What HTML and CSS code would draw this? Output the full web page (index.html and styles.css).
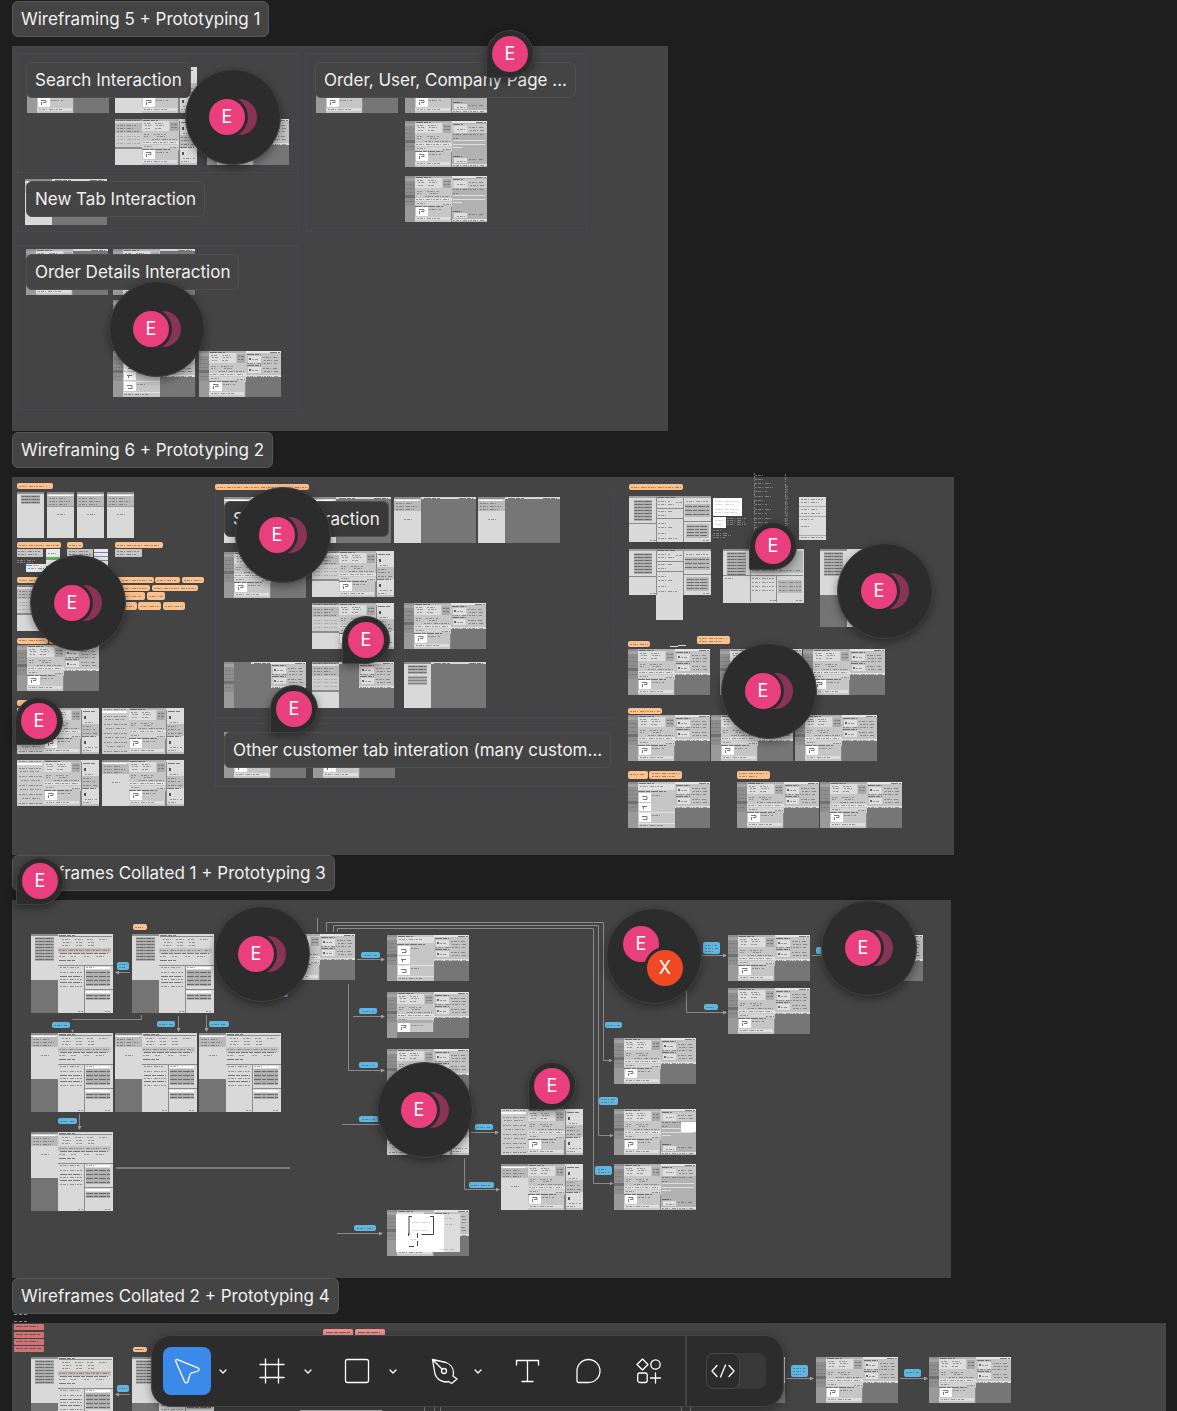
FILE: index.html
```html
<!DOCTYPE html>
<html lang="en">
<head>
<meta charset="utf-8">
<meta name="viewport" content="width=device-width, initial-scale=1">
<title>Wireframes</title>
<link rel="stylesheet" href="styles.css">
</head>
<body>
<svg class="defs" aria-hidden="true">
  <defs>
    <!-- narrow navigation rail, 10 wide -->
    <g id="rail">
      <rect width="10" height="46" fill="#8e8e8e"/>
      <rect y="2" width="10" height="3" fill="#a2a2a2"/>
      <rect y="19" width="10" height="3" fill="#707070"/>
      <rect y="30" width="10" height="16" fill="#9a9a9a"/>
      <path class="ink soft" d="M1 8.5h8M1 12.5h8M1 16.5h8M1 25.5h8"/>
    </g>
    <!-- wide navigation list, 27 wide -->
    <g id="nav">
      <rect width="27" height="46" fill="#d9d9d9"/>
      <rect width="27" height="2" fill="#8c8c8c"/>
      <rect y="4" width="27" height="10" fill="#b9b9b9"/>
      <rect y="14" width="27" height="14" fill="#cdcdcd"/>
      <rect y="28" width="27" height="2" fill="#8c8c8c"/>
      <path class="ink" d="M2 1.5h22M2 6.5h20M2 9.5h16M2 12.5h22"/>
      <path class="ink soft" d="M2 17.5h23M2 20.5h23M2 24.5h23"/>
    </g>
    <g id="nav-list">
      <rect width="27" height="46" fill="#cbcbcb"/>
      <rect y="3" width="25" height="2" fill="#fff"/>
      <path class="ink" d="M2 1.5h22M2 8.5h22M3 11.5h20M2 16.5h23M4 20.5h19M2 25.5h23M3 29.5h21M2 34.5h23M5 38.5h18M2 43.5h23"/>
    </g>
    <g id="nav-short">
      <rect width="27" height="46" fill="#d9d9d9"/>
      <rect width="27" height="2" fill="#8c8c8c"/>
      <rect y="4" width="27" height="10" fill="#b9b9b9"/>
      <path d="M2 3.5h22" stroke="#fff"/>
      <path class="ink" d="M2 6.5h16M2 9.5h21M2 12.5h18M10 22.5h9"/>
    </g>
    <g id="nav-bars">
      <rect width="27" height="46" fill="#d9d9d9"/>
      <rect width="27" height="2" fill="#8c8c8c"/>
      <path d="M4 4.5h19M4 7.5h19M4 10.5h19" stroke="#858585" stroke-width="2"/>
      <path class="ink" d="M5 4.5h17M5 7.5h17M5 10.5h17"/>
    </g>
    <g id="nav-full">
      <use href="#nav-bars"/>
      <path d="M4 13.5h19M4 16.5h19M4 19.5h19M4 22.5h19M4 25.5h19" stroke="#858585" stroke-width="2"/>
      <path class="ink" d="M5 13.5h17M5 16.5h17M5 19.5h17M5 22.5h17M5 25.5h17"/>
    </g>
    <!-- order details column, 37 wide -->
    <g id="main">
      <rect width="37" height="46" fill="#c6c6c6"/>
      <rect width="37" height="2" fill="#b0b0b0"/>
      <rect y="2" width="27" height="10" fill="#dcdcdc"/>
      <rect x="28" y="3" width="8" height="9" fill="#a9a9a9"/>
      <rect y="22" width="37" height="3" fill="#e0e0e0"/>
      <rect y="26" width="37" height="3" fill="#d4d4d4"/>
      <rect x="1" y="31" width="12" height="9" fill="#fff"/>
      <rect y="41" width="35" height="3" fill="#dedede"/>
      <rect x="36" y="31" width="1" height="15" fill="#888"/>
      <path class="ink strong" d="M1 1.5h15M0 30.5h28"/>
      <path class="ink" d="M2 4.5h7M13 4.5h8M3 6.5h6M14 6.5h9M3 9.5h5M13 9.5h7M29 5.5h6M29 8.5h6M2 15.5h5M12 15.5h12M2 17.5h4M15 17.5h9M10 20.5h26M1 23.5h34M2 27.5h8M28 28.5h8M2 42.5h24M14 33.5h12"/>
      <path class="plan" d="M4 33.5h5v2h-3M4.500 35v3"/>
    </g>
    <g id="plans">
      <rect width="37" height="46" fill="#c6c6c6"/>
      <rect y="2" width="37" height="6" fill="#e0e0e0"/>
      <path d="M1 11h12v9h-12zM1 21h12v8h-12zM1 31h12v9h-12z" fill="#fff"/>
      <path d="M0 30.5h37M0 41.5h37" stroke="#e2e2e2"/>
      <path class="ink strong" d="M1 1.5h15M0 9.5h28"/>
      <path class="ink" d="M2 4.5h24M14 13.5h10M14 33.5h10M2 43.5h24"/>
      <path class="plan" d="M4 14.5h5v3h-4M4 24.5h5M5.500 27v-2M4 34.5h5v3h-4"/>
    </g>
    <!-- customer panels, 35 wide and 26 high -->
    <g id="panels">
      <rect width="35" height="26" fill="#c2c2c2"/>
      <rect width="35" height="2" fill="#e6e6e6"/>
      <path d="M2 5h13v7H2zM2 16h13v6H2zM0 24h35v2H0z" fill="#dedede"/>
      <path class="ink strong" d="M1 3.5h14M1 14.5h14M24 1.5h10"/>
      <path class="ink" d="M17 6.5h14M18 9.5h15M6 8.5h6M1 12.5h30M17 17.5h14M18 20.5h15M6 19.5h6M1 25.5h32"/>
      <path d="M3 7h2v2H3zM3 18h2v2H3z" fill="#666"/>
    </g>
    <g id="panels-tall">
      <rect width="35" height="46" fill="#b2b2b2"/>
      <rect width="35" height="2" fill="#e6e6e6"/>
      <rect y="3" width="35" height="9" fill="#c8c8c8"/>
      <path d="M2 5h13v7H2zM1 19h32v1H1zM1 23h32v1H1zM1 26h9v1H1zM2 37h13v5H2zM0 43h35v2H0z" fill="#dedede"/>
      <path class="ink strong" d="M1 3.5h10M1 35.5h9M24 1.5h10"/>
      <path class="ink" d="M17 6.5h14M18 9.5h14M5 8.5h8M1 13.5h30M1 17.5h5M5 40.5h8M17 38.5h15M1 44.5h32"/>
    </g>
    <g id="aside">
      <rect width="18" height="46" fill="#dcdcdc"/>
      <path d="M0 16h18v12H0zM0 44h18v2H0z" fill="#bdbdbd"/>
      <path d="M.5 2v44" stroke="#858585"/>
      <path class="ink strong" d="M2 3.5h12M1 28.5h14"/>
      <path class="ink" d="M4 14.5h9M2 18.5h9M2 21.5h12M2 25.5h14M4 39.5h12M2 42.5h9"/>
      <path d="M3 8h2v3H3zM3 33h2v3H3z" fill="#555"/>
    </g>
    <!-- whole screens, 82 x 46 -->
    <g id="blank"><rect width="82" height="46" fill="#767676"/><path d="M27 1h55" stroke="#d8d8d8" stroke-width="2"/><path class="ink strong" d="M30 1.5h16M65 1.5h14"/></g>
    <g id="scr"><use href="#blank"/><use href="#rail"/><use href="#main" x="10"/><use href="#panels" x="47"/></g>
    <g id="scr-plans"><use href="#blank"/><use href="#rail"/><use href="#plans" x="10"/><use href="#panels" x="47"/></g>
    <g id="scr-detail"><use href="#blank"/><use href="#rail"/><use href="#main" x="10"/></g>
    <g id="scr-tall"><use href="#rail"/><use href="#main" x="10"/><use href="#panels-tall" x="47"/></g>
    <g id="scr-wide"><use href="#nav"/><use href="#main" x="27"/><use href="#aside" x="64"/></g>
    <g id="scr-list"><use href="#nav-list"/><use href="#main" x="27"/><use href="#aside" x="64"/></g>
    <g id="scr-short"><use href="#nav-short"/><use href="#main" x="27"/><use href="#aside" x="64"/></g>
    <g id="scr-nav"><use href="#blank"/><use href="#nav-short"/></g>
    <g id="scr-menu"><use href="#blank"/><use href="#nav-bars"/><path d="M4 15.5h19M4 18.5h19M4 21.5h19" stroke="#858585" stroke-width="2"/></g>
    <g id="scr-rail"><use href="#blank"/><use href="#rail"/><path d="M10 2h17v1H10z" fill="#767676"/><use href="#panels" x="47"/></g>
    <g id="scr-mixed"><use href="#blank"/><use href="#nav"/><use href="#panels" x="47"/></g>
    <!-- product form, 55 wide -->
    <g id="form">
      <rect width="55" height="79" fill="#d9d9d9"/>
      <path d="M0 14h53v5H0z" fill="#c4c4c4"/>
      <path d="M1 2.5h53M0 31.5h55M26.5 31v48M27 55.5h28" stroke="#8a8a8a"/>
      <path d="M27 33h25v2H27zM27 57h25v2H27z" fill="#fff"/>
      <path d="M28 36h24v16H28zM28 60h24v6H28z" fill="#b0b0b0"/>
      <path class="ink strong" d="M1 1.5h16M2 19.5h48M1 26.5h16M2 42.5h22M2 48.5h22M28 38.5h24M28 42.5h24M28 46.5h24M28 50.5h24M28 61.5h24M28 64.5h24"/>
      <path class="ink" d="M4 5.5h10M17 5.5h8M29 5.5h6M41 5.5h9M5 8.5h9M18 8.5h6M30 8.5h6M4 11.5h9M18 11.5h7M30 11.5h6M1 16.5h50M1 22.5h6M13 22.5h5M26 22.5h5M38 22.5h8M2 33.5h20M28 33.5h10M2 38.5h22M2 45.5h22M2 52.5h22M20 77.5h5M47 77.5h5"/>
    </g>
    <g id="big"><rect width="82" height="79" fill="#747474"/><use href="#nav-full"/><use href="#form" x="27"/></g>
    <g id="big-nav"><rect width="82" height="79" fill="#747474"/><use href="#nav-short"/><use href="#form" x="27"/></g>
    <g id="trio">
      <rect width="82" height="46" fill="#dadada"/><rect width="82" height="2" fill="#a0a0a0"/>
      <path d="M5 5.5h18M5 8.5h18M5 11.5h18M5 14.5h18M5 17.5h18M5 20.5h18M5 23.5h18" stroke="#858585" stroke-width="2"/>
      <path d="M56 8h25v13H56zM57 28h23v14H57z" fill="#b8b8b8"/>
      <path d="M27.5 2v44M54.5 2v44M0 27.5h27M27 12.5h27M27 22.5h27M55 25.5h27" stroke="#8a8a8a"/>
      <path class="ink strong" d="M28 1.5h18M56 10.5h24M56 14.5h24M56 18.5h24M58 30.5h21M58 33.5h21M58 36.5h21M58 39.5h21"/>
      <path class="ink" d="M6 5.5h16M6 8.5h16M6 11.5h16M6 14.5h16M6 17.5h16M6 20.5h16M6 23.5h16M29 5.5h12M29 8.5h17M47 6.5h6M29 15.5h14M29 19.5h8M29 27.5h10M29 31.5h14M29 37.5h10M29 42.5h20M57 5.5h22M21 44.5h6M74 44.5h6"/>
    </g>
    <g id="phone"><use href="#nav-short"/><path d="M0 14.5h27" stroke="#999"/></g>
    <marker id="tip" viewBox="0 0 4 4" refX="3" refY="2" markerWidth="4" markerHeight="4" orient="auto"><path d="M0 0l4 2-4 2z" fill="#a0a0a0"/></marker>
  </defs>
</svg>

<main class="canvas">
  <section class="section">
    <h2 class="label">Wireframing 5 + Prototyping 1</h2>
    <div class="board board-one">
      <svg class="art" viewBox="12 46 656 385" width="656" height="385" aria-hidden="true">
        <path class="frame" d="M17.500 53.500h281v178h-281zM17.500 172.500h281M306.500 53.500h280v178h-280zM17.500 245.500h281v164h-281z"/>
        <use href="#scr-detail" x="27" y="67"/><use href="#scr-wide" x="115" y="67"/>
        <use href="#scr-wide" x="115" y="119"/><use href="#scr" x="207" y="119"/>
        <use href="#scr-nav" x="25" y="179"/>
        <use href="#scr-detail" x="26" y="249"/><use href="#scr-detail" x="113" y="249"/>
        <use href="#scr" x="113" y="300"/>
        <rect x="112" y="322" width="84" height="28" fill="#444"/>
        <use href="#scr-plans" x="113" y="351"/><use href="#scr" x="199" y="351"/>
        <use href="#scr-detail" x="316" y="67"/><use href="#scr-tall" x="405" y="67"/>
        <use href="#scr-tall" x="405" y="121"/><use href="#scr-tall" x="405" y="176"/>
      </svg>
      <h3 class="label inner at-search">Search Interaction</h3>
      <h3 class="label inner at-newtab">New Tab Interaction</h3>
      <h3 class="label inner at-details">Order Details Interaction</h3>
      <h3 class="label inner at-pages">Order, User, Company Page ...</h3>
      <button class="cluster c1"><span class="avatar">E</span></button>
      <button class="cluster c2"><span class="avatar">E</span></button>
      <button class="pin p1"><span class="avatar">E</span></button>
    </div>
  </section>

  <section class="section">
    <h2 class="label">Wireframing 6 + Prototyping 2</h2>
    <div class="board board-two">
      <svg class="art" viewBox="12 477 942 378" width="942" height="378" aria-hidden="true">
        <path class="frame" d="M613.500 660v-168M215.500 492.500v225h398M215.500 786.500v-63h398M215.500 786.500h398"/>
        <g fill="#fcc08c">
          <rect x="17" y="483" width="36" height="6" rx="2"/><rect x="215" y="484" width="94" height="6" rx="2"/>
          <rect x="17" y="542" width="44" height="6" rx="2"/><rect x="67" y="542" width="16" height="6" rx="2"/><rect x="115" y="542" width="48" height="6" rx="2"/>
          <rect x="17" y="577" width="50" height="6" rx="2"/><rect x="110" y="577" width="44" height="6" rx="2"/><rect x="155" y="577" width="25" height="6" rx="2"/><rect x="182" y="577" width="22" height="6" rx="2"/>
          <rect x="110" y="585" width="40" height="6" rx="2"/><rect x="152" y="585" width="46" height="6" rx="2"/>
          <rect x="110" y="592" width="35" height="8" rx="2"/><rect x="147" y="592" width="18" height="8" rx="2"/>
          <rect x="110" y="602" width="27" height="8" rx="2"/><rect x="138" y="602" width="23" height="8" rx="2"/><rect x="163" y="602" width="22" height="8" rx="2"/>
          <rect x="17" y="638" width="31" height="6" rx="2"/><rect x="49" y="638" width="20" height="6" rx="2"/><rect x="17" y="700" width="20" height="6" rx="2"/>
          <rect x="629" y="484" width="54" height="6" rx="2"/><rect x="628" y="641" width="22" height="6" rx="2"/><rect x="697" y="636" width="33" height="8" rx="2"/>
          <rect x="628" y="708" width="34" height="6" rx="2"/><rect x="628" y="771" width="20" height="8" rx="2"/><rect x="649" y="771" width="33" height="8" rx="2"/><rect x="737" y="771" width="33" height="8" rx="2"/>
        </g>
        <path class="ink" d="M19 486.500h28M217 487.500h90M19 545.500h40M69 545.500h12M117 545.500h44M19 580.500h46M122 580.500h30M157 580.500h20M184 580.500h18M122 588.500h26M154 588.500h42M122 596.500h20M149 596.500h14M126 606.500h9M140 606.500h19M165 606.500h18M19 640.500h27M631 487.500h50M630 644.500h18M699 638.500h28M699 641.500h22M630 711.500h30M630 774.500h14M652 773.500h28M652 776.500h24M739 773.500h28M739 776.500h18"/>
        <use href="#nav-bars" x="17" y="492"/><use href="#phone" x="47" y="492"/><use href="#phone" x="77" y="492"/><use href="#phone" x="107" y="492"/>
        <path d="M17 549h26v8H17zM67 549h26v8H67zM115 549h27v8H115z" fill="#c4c4c4"/>
        <path d="M46 549h14v17H46zM94 549h14v17H94zM26 564h20v8H26z" fill="#e6e9ee"/>
        <path d="M46 557h14v3H46z" fill="#6cb35c"/>
        <path d="M26 565.500h6" stroke="#5f9de0"/><path d="M33 565.500h6" stroke="#f0a35e"/>
        <path d="M94 552.500h14M94 556.500h14M94 560.500h14" stroke="#7f8797"/>
        <path class="ink" d="M18 551.500h22M18 554.500h20M69 551.500h20M69 554.500h22M117 551.500h22M117 554.500h20M48 553.500h10M28 568.500h16"/>
        <path class="ink pale" d="M17 560.500h18M17 562.500h16"/>
        <use href="#nav" x="17" y="585"/><use href="#scr" x="17" y="645"/>
        <use href="#scr-list" x="17" y="708"/><use href="#scr-list" x="102" y="708"/>
        <use href="#scr-list" x="17" y="760"/><use href="#scr-short" x="102" y="760"/>
        <use href="#scr-nav" x="224" y="497"/><use href="#scr-nav" x="309" y="497"/><use href="#scr-nav" x="394" y="497"/><use href="#scr-nav" x="478" y="497"/>
        <use href="#scr-detail" x="224" y="552"/><use href="#scr-wide" x="312" y="551"/>
        <use href="#scr-wide" x="312" y="603"/><use href="#scr" x="404" y="603"/>
        <use href="#scr-rail" x="224" y="662"/><use href="#scr-mixed" x="312" y="662"/><use href="#scr-menu" x="404" y="662"/>
        <use href="#scr-detail" x="224" y="732"/><use href="#scr-detail" x="313" y="732"/>
        <use href="#trio" x="629" y="496"/><use href="#trio" x="629" y="549"/>
        <rect x="656" y="595" width="27" height="25" fill="#dadada"/>
        <path d="M713 498h29v18h-29zM713 517h13v11h-13z" fill="#fff"/>
        <path class="ink soft" d="M715 501.500h25M715 504.500h20M715 509.500h24M715 512.500h22M715 520.500h9M715 524.500h9"/>
        <path class="ink pale" d="M727 518.500h20M727 520.500h14M727 522.500h18M727 524.500h20M713 530.500h8M713 533.500h14M713 535.500h18M713 537.500h12"/>
        <path class="ink pale" d="M754.500 473v60M785.500 474v58M755 475.500h8M755 479.500h8M755 483.500h16M755 487.500h18M755 491.500h12M755 496.500h16M755 500.500h10M755 504.500h12M755 509.500h17M755 513.500h12M755 518.500h16M755 522.500h13M755 527.500h16M787 485.500v40"/>
        <rect x="799" y="497" width="27" height="43" fill="#dcdcdc"/>
        <path d="M799 506.500h27M799 516.500h27M799 535.500h27" stroke="#aaa"/>
        <path class="ink" d="M801 499.500h22M801 502.500h18M801 509.500h16M801 513.500h20M801 519.500h12M801 526.500h10M801 537.500h22"/>
        <rect x="723" y="549" width="81" height="54" fill="#d9d9d9"/><use href="#nav-full" x="723" y="549"/>
        <path d="M750 551h53v22h-53zM778 580h24v13h-24z" fill="#b8b8b8"/><path d="M723 575.500h80M750.500 549v53M776.500 575v27" stroke="#8a8a8a"/>
        <path class="ink" d="M752 570.500h48M752 578.500h22M752 582.500h22M752 586.500h22M752 590.500h22M779 582.500h22M779 586.500h22M779 590.500h22M725 578.500h10M770 600.500h6M796 600.500h6"/>
        <rect x="820" y="549" width="50" height="78" fill="#747474"/><use href="#nav-full" x="820" y="549"/><rect x="847" y="549" width="30" height="78" fill="#dadada"/>
        <path d="M670 646.500h8M678 645.500h8" stroke="#ddd"/>
        <use href="#scr" x="628" y="649"/><use href="#scr" x="720" y="649"/><use href="#scr" x="803" y="649"/>
        <use href="#scr" x="628" y="715"/><use href="#scr" x="711" y="715"/><use href="#scr" x="795" y="715"/>
        <use href="#scr-plans" x="628" y="782"/><use href="#scr" x="737" y="782"/><use href="#scr" x="820" y="782"/>
      </svg>
      <h3 class="label inner dim at-search-two">Search Interaction</h3>
      <h3 class="label inner at-other">Other customer tab interation (many custom...</h3>
      <button class="cluster c3"><span class="avatar">E</span></button>
      <button class="cluster c4"><span class="avatar">E</span></button>
      <button class="cluster c5"><span class="avatar">E</span></button>
      <button class="cluster c6"><span class="avatar">E</span></button>
      <button class="pin p2"><span class="avatar">E</span></button>
      <button class="pin p3"><span class="avatar">E</span></button>
      <button class="pin p4"><span class="avatar">E</span></button>
      <button class="pin p5"><span class="avatar">E</span></button>
    </div>
  </section>

  <section class="section">
    <h2 class="label">Wireframes Collated 1 + Prototyping 3</h2>
    <div class="board board-three">
      <svg class="art" viewBox="12 900 939 378" width="939" height="378" aria-hidden="true">
        <rect x="133" y="924" width="14" height="6" rx="2" fill="#fcc08c"/>
        <path class="ink" d="M135 927.500h9"/>
        <use href="#big" x="31" y="934"/><use href="#big" x="132" y="934"/>
        <path d="M59 949.500h52" stroke="#d59a9a"/>
        <use href="#big-nav" x="31" y="1033"/><use href="#big-nav" x="115" y="1033"/><use href="#big-nav" x="199" y="1033"/>
        <use href="#big-nav" x="31" y="1132"/>
        <path d="M116 1168h174" stroke="#7a7a7a" stroke-width="2"/>
        <path d="M317.500 918v14" stroke="#8a8a8a"/>
        <g class="wire">
          <path d="M130 972.500h-14"/><path d="M141.500 1015v4.500H72.500v12"/><path d="M178.500 1016v15"/><path d="M206.500 1015v16"/><path d="M79.500 1114v15"/>
          <path d="M348.500 984v86.500H384"/><path d="M464.500 1158v31.500H499"/><path d="M357 959.500h27"/><path d="M353 1016.500h31"/><path d="M342 1124.500h44"/><path d="M471 1132.500h27"/><path d="M337 1233.500h45"/>
          <path d="M326.500 932v-9.500h277v138h8"/><path d="M333.500 932v-6.500h265v210h14"/><path d="M337.500 932v-3.500h256v255h19"/><path d="M701 955.500h25"/><path d="M686.500 985v27.500H726"/><path d="M812 955.500h20"/>
        </g>
        <path d="M72.500 1020v10" stroke="#444" stroke-width="3"/>
        <use href="#scr" x="273" y="934"/>
        <use href="#scr-plans" x="387" y="935"/><use href="#scr" x="387" y="992"/>
        <path d="M397 1020h37v3h-37z" fill="#adadad"/><path d="M397 1032h37v6h-37z" fill="#767676"/>
        <use href="#scr" x="387" y="1049"/><use href="#scr-list" x="387" y="1109"/>
        <use href="#scr-list" x="501" y="1109"/><use href="#scr-short" x="501" y="1164"/>
        <use href="#scr" x="728" y="935"/><use href="#scr" x="728" y="988"/><use href="#scr" x="841" y="935"/>
        <use href="#scr" x="614" y="1038"/><use href="#scr-tall" x="614" y="1109"/><rect x="681" y="1122" width="15" height="10" fill="#fff"/><use href="#scr-tall" x="614" y="1164"/>
        <use href="#scr" x="387" y="1210"/>
        <path d="M396 1214h48v38h-48z" fill="#fff"/><path d="M444 1214h16v38h-16z" fill="#dcdcdc"/>
        <path d="M409 1216v19M433.500 1216v18.500h-12M409 1216.500h3M430 1216.500h4M417.500 1233v5M408.500 1233v3M417.500 1241v5M409 1246.500h5" fill="none" stroke="#444"/>
        <path class="ink soft" d="M412 1222.500h18M412 1230.500h16M410 1239.500h6M446 1218.500h10M446 1224.500h8M440 1249.500h14"/>
        <g fill="#5fb6e0">
          <rect x="117" y="962" width="12" height="8" rx="2"/><rect x="52" y="1022" width="18" height="6" rx="2"/><rect x="157" y="1021" width="18" height="6" rx="2"/><rect x="209" y="1021" width="20" height="6" rx="2"/>
          <rect x="58" y="1118" width="19" height="6" rx="2"/><rect x="278" y="991" width="10" height="6" rx="2"/>
          <rect x="361" y="952" width="19" height="6" rx="2"/><rect x="359" y="1008" width="18" height="6" rx="2"/><rect x="359" y="1062" width="19" height="6" rx="2"/><rect x="359" y="1116" width="20" height="6" rx="2"/>
          <rect x="475" y="1124" width="18" height="6" rx="2"/><rect x="469" y="1182" width="25" height="6" rx="2"/><rect x="354" y="1225" width="22" height="6" rx="2"/>
          <rect x="703" y="942" width="17" height="12" rx="2"/><rect x="704" y="1004" width="14" height="6" rx="2"/><rect x="816" y="947" width="12" height="7" rx="2"/>
          <rect x="605" y="1022" width="17" height="6" rx="2"/><rect x="599" y="1097" width="19" height="8" rx="2"/><rect x="595" y="1166" width="17" height="9" rx="2"/>
        </g>
        <path class="ink" d="M119 964.500h8M119 967.500h7M54 1025.500h13M159 1024.500h14M211 1024.500h15M60 1121.500h14M364 955.500h13M362 1011.500h12M362 1065.500h12M362 1119.500h13M477 1127.500h13M471 1185.500h20M357 1228.500h16M705 945.500h12M705 948.500h13M705 951.500h10M706 1007.500h9M607 1025.500h13M601 1099.500h14M601 1102.500h12M598 1169.500h9M598 1172.500h11"/>
      </svg>
      <button class="pin p6"><span class="avatar">E</span></button>
      <button class="pin p7"><span class="avatar">E</span></button>
      <button class="cluster c7"><span class="avatar">E</span></button>
      <button class="cluster c8"><span class="avatar">E</span></button>
      <button class="cluster c9"><span class="avatar">E</span></button>
      <button class="cluster pair c10"><span class="avatar">E</span><span class="avatar other">X</span></button>
    </div>
  </section>

  <section class="section">
    <h2 class="label">Wireframes Collated 2 + Prototyping 4</h2>
    <div class="board board-four">
      <svg class="art" viewBox="12 1323 1154 378" width="1154" height="378" aria-hidden="true">
        <path d="M14 1321.500h14M14 1314.500h14" stroke="#8a8a8a" stroke-dasharray="3 2"/>
        <g fill="#d07272"><rect x="14" y="1324" width="30" height="6" rx="1"/><rect x="14" y="1332" width="30" height="6" rx="1"/><rect x="14" y="1339" width="30" height="6" rx="1"/><rect x="14" y="1346" width="30" height="6" rx="1"/></g>
        <g fill="#f39494"><rect x="323" y="1329" width="30" height="8" rx="2"/><rect x="355" y="1329" width="30" height="8" rx="2"/></g>
        <rect x="133" y="1347" width="14" height="5" rx="2" fill="#fcc08c"/>
        <path class="ink strong" d="M16 1326.500h22M16 1334.500h24M16 1341.500h22M16 1348.500h26M326 1332.500h24M358 1332.500h22M135 1349.500h9"/>
        <use href="#big" x="31" y="1357"/><use href="#big" x="132" y="1357"/>
        <path d="M59 1372.500h52" stroke="#d59a9a"/>
        <use href="#scr" x="703" y="1357"/><use href="#scr" x="816" y="1357"/><use href="#scr" x="929" y="1357"/>
        <path d="M300 1410h82v40h-82z" fill="#bbb"/>
        <g class="wire"><path d="M130 1394.500h-14"/><path d="M786 1378.500h27"/><path d="M900 1378.500h27"/><path d="M424.500 1400v40"/><path d="M434.500 1400v40"/><path d="M440.500 1400v40"/><path d="M681.500 1400v40"/><path d="M690.500 1400v40"/></g>
        <g fill="#5fb6e0"><rect x="117" y="1385" width="12" height="7" rx="2"/><rect x="791" y="1365" width="17" height="12" rx="2"/><rect x="904" y="1369" width="17" height="8" rx="2"/></g>
        <path class="ink" d="M119 1388.500h8M793 1368.500h12M793 1371.500h12M793 1374.500h10M906 1372.500h13"/>
      </svg>
    </div>
  </section>
</main>

<nav class="toolbar" aria-label="Tools">
  <div class="tools">
    <div class="tool">
      <button class="key active" aria-label="Move"><svg class="icon" viewBox="0 0 24 24"><path d="M.7 2.200C.2 1 1.200.2 2.400.6L22.900 8.800c1.600.7 1.500 2.800-.1 3.300l-6.300 1.900c-.8.300-1.200.7-1.500 1.500l-2 7c-.5 1.700-2.600 1.800-3.400.2z"/></svg></button>
      <button class="caret" aria-label="Move options"><svg viewBox="0 0 8 5"><path d="M1 1l3 3 3-3"/></svg></button>
    </div>
    <div class="tool">
      <button class="key" aria-label="Frame"><svg class="icon" viewBox="0 0 24 24"><path d="M5.500 0v24M18.500 0v24M0 5.500h24M0 18.500h24"/></svg></button>
      <button class="caret" aria-label="Frame options"><svg viewBox="0 0 8 5"><path d="M1 1l3 3 3-3"/></svg></button>
    </div>
    <div class="tool">
      <button class="key" aria-label="Rectangle"><svg class="icon" viewBox="0 0 24 24"><rect x=".5" y=".5" width="23" height="23" rx="2"/></svg></button>
      <button class="caret" aria-label="Shape options"><svg viewBox="0 0 8 5"><path d="M1 1l3 3 3-3"/></svg></button>
    </div>
    <div class="tool">
      <button class="key" aria-label="Pen"><svg class="icon" viewBox="0 0 24 24"><path d="M2.500.5L16 3.500C20 5 23.500 9 23.500 14L23 17l4 3-5.500 4.500-3-2-3.500.5C9.500 22 6.500 19.500 5 15zM2.500.5l9.700 9.700"/><circle cx="14" cy="12" r="2.500"/></svg></button>
      <button class="caret" aria-label="Pen options"><svg viewBox="0 0 8 5"><path d="M1 1l3 3 3-3"/></svg></button>
    </div>
    <button class="key" aria-label="Text"><svg class="icon" viewBox="0 0 24 24"><path d="M1.500 6V1.500h22V6M12.500 1.500v21M7 22.500h11"/></svg></button>
    <button class="key" aria-label="Comment"><svg class="icon" viewBox="0 0 24 24"><path d="M12.500.5a11.500 11.500 0 0 1 0 23H2.500a1.500 1.500 0 0 1-1.500-1.500V12A11.500 11.500 0 0 1 12.500.5z"/></svg></button>
    <button class="key" aria-label="Actions"><svg class="icon" viewBox="0 0 24 24"><path d="M5.500 0L11 5.500 5.500 11 0 5.500zM18.500 14v10M13.500 19h10"/><circle cx="18.500" cy="5.500" r="4.700"/><rect x=".7" y="14" width="9.500" height="9.500" rx="2"/></svg></button>
  </div>
  <div class="mode">
    <button class="switch" aria-label="Dev Mode"><span class="knob"><svg class="code" viewBox="0 0 24 14"><path d="M6 1.500L1 7l5 5.500M18 1.500L23 7l-5 5.500M14.500 1l-5 12"/></svg></span></button>
  </div>
</nav>
</body>
</html>
```
FILE: styles.css
```css
* { box-sizing: border-box; }
body {
  margin: 0;
  background: #1e1e1e;
  color: #f0f0f0;
  font-family: Inter, "Liberation Sans", sans-serif;
  font-size: 17px;
}
button { padding: 0; border: 0; background: none; color: inherit; font: inherit; }
.defs { position: absolute; width: 0; height: 0; }

/* Canvas and its sections */
.canvas { height: 100vh; overflow: hidden; padding: 1px 0 0 12px; }
.label {
  width: max-content;
  height: 36px;
  margin: 0 0 9px;
  padding: 0 8px;
  border: 1px solid #565656;
  border-radius: 6px;
  background: #444;
  font-size: 17px;
  font-weight: 400;
  line-height: 34px;
  white-space: nowrap;
}
.board { position: relative; width: max-content; background: #444; }
.board-one { margin-bottom: 1px; }
.art { display: block; overflow: visible; }
.inner { position: absolute; margin: 0; border-color: #4f4f4f; }
.dim { background: #393939; }

/* Canvas artwork */
.ink { fill: none; stroke: #4c4c4c; stroke-opacity: .5; stroke-dasharray: 2 1 3 1 1 2 4 1 1 1; }
.soft { stroke-opacity: .25; }
.strong { stroke-opacity: .7; stroke-dasharray: 7 1 4 1; }
.pale { stroke: #bbb; stroke-opacity: .5; }
.plan { fill: none; stroke: #777; }
.frame { fill: none; stroke: #464a60; stroke-dasharray: 2 1; }
.wire { fill: none; stroke: #8a8a8a; }
.wire path { marker-end: url(#tip); }

/* Comment pins */
.pin, .cluster {
  position: absolute;
  border: 1px solid #414141;
  background: #2c2c2c;
  box-shadow: 0 3px 9px rgba(0, 0, 0, .4);
}
.pin { width: 48px; height: 48px; padding: 5px; border-radius: 24px 24px 24px 2px; }
.cluster { width: 96px; height: 96px; border-radius: 50%; }
.avatar {
  display: block;
  width: 36px;
  height: 36px;
  border-radius: 50%;
  background: #e93f7c;
  color: #fff;
  font-size: 18px;
  line-height: 36px;
  text-align: center;
}
.cluster .avatar { position: absolute; top: 29px; left: 23px; box-shadow: 0 0 0 3px #2c2c2c; }
.cluster::before {
  content: "";
  position: absolute;
  top: 29px;
  left: 35px;
  width: 36px;
  height: 36px;
  border-radius: 50%;
  background: #8a3455;
}
.pair::before { display: none; }
.cluster.pair .avatar { top: 17px; left: 16px; }
.cluster.pair .other { top: 41px; left: 40px; background: #f04a25; }

/* Places on each board */
.at-search { left: 14px; top: 16px; }
.at-newtab { left: 14px; top: 135px; }
.at-details { left: 14px; top: 208px; }
.at-pages { left: 303px; top: 16px; }
.at-search-two { left: 212px; top: 24px; }
.at-other { left: 212px; top: 255px; }
.c1 { left: 173px; top: 23px; }
.c2 { left: 97px; top: 235px; }
.c3 { left: 223px; top: 10px; }
.c4 { left: 18px; top: 78px; }
.c5 { left: 825px; top: 66px; }
.c6 { left: 709px; top: 166px; }
.c7 { left: 202px; top: 6px; }
.c8 { left: 365px; top: 162px; }
.c9 { left: 809px; top: 0; }
.c10 { left: 594px; top: 8px; }
.p1 { left: 474px; top: -16px; }
.p2 { left: 330px; top: 139px; }
.p3 { left: 258px; top: 208px; }
.p4 { left: 3px; top: 220px; }
.p5 { left: 737px; top: 45px; }
.p6 { left: 4px; top: -43px; }
.p7 { left: 516px; top: 162px; }

/* Toolbar */
.toolbar {
  position: fixed;
  left: 151px;
  bottom: 4px;
  display: flex;
  border: 1px solid #444;
  border-radius: 20px;
  background: #2c2c2c;
  box-shadow: 0 2px 10px rgba(0, 0, 0, .4);
}
.tools { display: flex; gap: 13px; padding: 11px 12px 11px 11px; }
.tool { display: flex; }
.key { display: grid; place-items: center; width: 48px; height: 48px; border-radius: 8px; }
.active { background: #3b8aea; }
.icon { display: block; width: 24px; height: 24px; overflow: visible; }
.caret { display: grid; place-items: center; width: 24px; height: 48px; }
.caret svg { width: 8px; height: 5px; overflow: visible; }
.toolbar svg { fill: none; stroke: #fff; stroke-width: 1.300; stroke-linecap: round; stroke-linejoin: round; }
.mode { display: flex; align-items: center; padding: 0 17px 0 19px; border-left: 2px solid #444; }
.switch { display: flex; width: 60px; height: 36px; border-radius: 8px; background: #383838; }
.knob {
  display: grid;
  place-items: center;
  width: 34px;
  height: 36px;
  border: 1px solid #484848;
  border-radius: 8px;
  background: #2c2c2c;
}
.code { width: 24px; height: 14px; }
```
